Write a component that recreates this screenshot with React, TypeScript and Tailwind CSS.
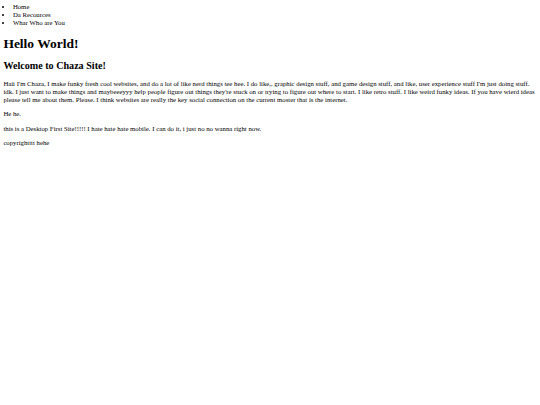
export default function App() {
  return (
    <div className="min-h-screen bg-white p-[3.375px] font-['Liberation_Serif','Times_New_Roman',serif] text-[6.75px] leading-[1.15] text-black">
      <nav>
        <ul className="list-disc pl-[9.5px]">
          <li>Home</li>
          <li>Da Recources</li>
          <li>Whar Who are You</li>
        </ul>
      </nav>

      <h1 className="my-[9px] text-[13.5px] font-bold">Hello World!</h1>
      <h2 className="my-[8.4px] text-[10.125px] font-bold">Welcome to Chaza Site!</h2>

      <p className="my-[6.75px]">
        Haii I'm Chaza, I make funky fresh cool websites, and do a lot of like nerd things tee hee. I do like,, graphic design stuff, and game design stuff, and like, user experience stuff I'm just doing stuff. idk. I just want to make things and maybeeeyyy help people figure out things they're stuck on or trying to figure out where to start. I like retro stuff. I like weird funky ideas. If you have wierd ideas please tell me about them. Please. I think websites are really the key social connection on the current moster that is the internet.
      </p>
      <p className="my-[6.75px]">He he.</p>
      <p className="my-[6.75px]">this is a Desktop First Site!!!!! I hate hate hate mobile. I can do it, i just no no wanna right now.</p>

      <footer>
        <p className="my-[6.75px]">copyrightttt hehe</p>
      </footer>
    </div>
  );
}
